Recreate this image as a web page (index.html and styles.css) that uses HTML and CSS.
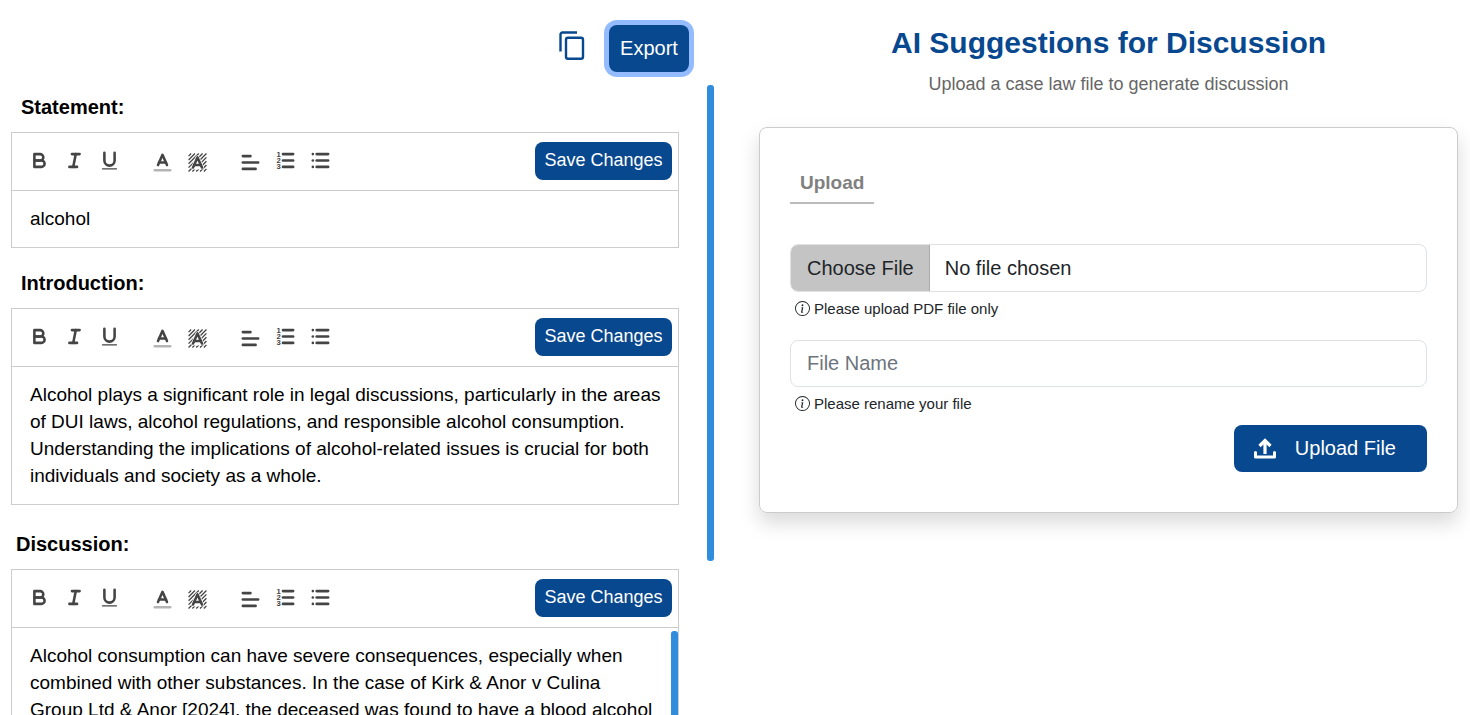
FILE: index.html
```html
<!DOCTYPE html>
<html lang="en">
<head>
    <meta charset="UTF-8">
    <meta name="viewport" content="width=device-width, initial-scale=1.0">
    <title>Case Discussion</title>
    <link rel="stylesheet" href="styles.css">
</head>
<body>
    <!-- toolbar icons -->
    <svg class="sprite" aria-hidden="true">
        <symbol id="i-bold" viewBox="0 0 18 18">
            <path class="st" d="M5,4H9.5A2.5,2.5,0,0,1,12,6.5v0A2.5,2.5,0,0,1,9.5,9H5A0,0,0,0,1,5,9V4A0,0,0,0,1,5,4Z"/>
            <path class="st" d="M5,9h5.5A2.5,2.5,0,0,1,13,11.5v0A2.5,2.5,0,0,1,10.5,14H5a0,0,0,0,1,0,0V9A0,0,0,0,1,5,9Z"/>
        </symbol>
        <symbol id="i-italic" viewBox="0 0 18 18">
            <line class="st" x1="7" x2="13" y1="4" y2="4"/>
            <line class="st" x1="5" x2="11" y1="14" y2="14"/>
            <line class="st" x1="8" x2="10" y1="14" y2="4"/>
        </symbol>
        <symbol id="i-underline" viewBox="0 0 18 18">
            <path class="st" d="M5,3V9a4.012,4.012,0,0,0,4,4H9a4.012,4.012,0,0,0,4-4V3"/>
            <rect class="fl" height="1" rx="0.5" ry="0.5" width="12" x="3" y="15"/>
        </symbol>
        <symbol id="i-color" viewBox="0 0 18 18">
            <line class="st faint" x1="3" x2="15" y1="15" y2="15"/>
            <polyline class="st" points="5.5 11 9 3 12.5 11"/>
            <line class="st" x1="11.63" x2="6.38" y1="9" y2="9"/>
        </symbol>
        <symbol id="i-background" viewBox="0 0 18 18">
            <path class="hatch" d="M2,4 4,2M2,7 7,2M2,10 10,2M2,13 13,2M2,16 16,2M5,16 16,5M8,16 16,8M11,16 16,11M14,16 16,14"/>
            <path class="halo" d="M5.500,13 9,5 12.500,13Z"/>
            <polyline class="st" points="5.5 13 9 5 12.5 13"/>
            <line class="st" x1="11.63" x2="6.38" y1="11" y2="11"/>
        </symbol>
        <symbol id="i-align" viewBox="0 0 18 18">
            <line class="st" x1="3" x2="15" y1="9" y2="9"/>
            <line class="st" x1="3" x2="13" y1="14" y2="14"/>
            <line class="st" x1="3" x2="9" y1="4" y2="4"/>
        </symbol>
        <symbol id="i-ordered" viewBox="0 0 18 18">
            <line class="st" x1="7" x2="15" y1="4" y2="4"/>
            <line class="st" x1="7" x2="15" y1="9" y2="9"/>
            <line class="st" x1="7" x2="15" y1="14" y2="14"/>
            <text class="num" x="2" y="6">1</text>
            <text class="num" x="2" y="11">2</text>
            <text class="num" x="2" y="16">3</text>
        </symbol>
        <symbol id="i-bullet" viewBox="0 0 18 18">
            <line class="st" x1="6" x2="15" y1="4" y2="4"/>
            <line class="st" x1="6" x2="15" y1="9" y2="9"/>
            <line class="st" x1="6" x2="15" y1="14" y2="14"/>
            <line class="st" x1="3" x2="3" y1="4" y2="4"/>
            <line class="st" x1="3" x2="3" y1="9" y2="9"/>
            <line class="st" x1="3" x2="3" y1="14" y2="14"/>
        </symbol>
        <symbol id="i-info" viewBox="0 0 16 16">
            <path d="M8 15A7 7 0 1 1 8 1a7 7 0 0 1 0 14m0 1A8 8 0 1 0 8 0a8 8 0 0 0 0 16"/>
            <path d="m8.930 6.588-2.290.287-.082.380.450.083c.294.070.352.176.288.469l-.738 3.468c-.194.897.105 1.319.808 1.319.545 0 1.178-.252 1.465-.598l.088-.416c-.200.176-.492.246-.686.246-.275 0-.375-.193-.304-.533zM9 4.500a1 1 0 1 1-2 0 1 1 0 0 1 2 0"/>
        </symbol>
    </svg>

    <div class="page">
        <section class="document">
            <div class="actions">
                <button type="button" class="copy-btn" aria-label="Copy">
                    <svg viewBox="0 0 26 30" fill="none" stroke="currentColor" stroke-width="2.400">
                        <path d="M1.500 20.500V3.500a2 2 0 0 1 2-2H18"/>
                        <rect x="7" y="6.800" width="17" height="21" rx="2"/>
                    </svg>
                </button>
                <button type="button" class="btn export-btn">Export</button>
            </div>

            <div class="scroll-area">
                <div class="sections">
                    <h2 class="label">Statement:</h2>
                    <div class="editor">
                        <div class="toolbar">
                            <div class="group">
                                <button type="button" aria-label="Bold"><svg><use href="#i-bold"/></svg></button>
                                <button type="button" aria-label="Italic"><svg><use href="#i-italic"/></svg></button>
                                <button type="button" aria-label="Underline"><svg><use href="#i-underline"/></svg></button>
                            </div>
                            <div class="group">
                                <button type="button" class="picker" aria-label="Text color"><svg><use href="#i-color"/></svg></button>
                                <button type="button" class="picker" aria-label="Highlight"><svg><use href="#i-background"/></svg></button>
                            </div>
                            <div class="group">
                                <button type="button" class="picker" aria-label="Align"><svg><use href="#i-align"/></svg></button>
                                <button type="button" aria-label="Numbered list"><svg><use href="#i-ordered"/></svg></button>
                                <button type="button" aria-label="Bullet list"><svg><use href="#i-bullet"/></svg></button>
                            </div>
                            <button type="button" class="btn save-btn">Save Changes</button>
                        </div>
                        <div class="content" contenteditable="true" spellcheck="false">alcohol</div>
                    </div>

                    <h2 class="label">Introduction:</h2>
                    <div class="editor">
                        <div class="toolbar">
                            <div class="group">
                                <button type="button" aria-label="Bold"><svg><use href="#i-bold"/></svg></button>
                                <button type="button" aria-label="Italic"><svg><use href="#i-italic"/></svg></button>
                                <button type="button" aria-label="Underline"><svg><use href="#i-underline"/></svg></button>
                            </div>
                            <div class="group">
                                <button type="button" class="picker" aria-label="Text color"><svg><use href="#i-color"/></svg></button>
                                <button type="button" class="picker" aria-label="Highlight"><svg><use href="#i-background"/></svg></button>
                            </div>
                            <div class="group">
                                <button type="button" class="picker" aria-label="Align"><svg><use href="#i-align"/></svg></button>
                                <button type="button" aria-label="Numbered list"><svg><use href="#i-ordered"/></svg></button>
                                <button type="button" aria-label="Bullet list"><svg><use href="#i-bullet"/></svg></button>
                            </div>
                            <button type="button" class="btn save-btn">Save Changes</button>
                        </div>
                        <div class="content" contenteditable="true" spellcheck="false">Alcohol plays a significant role in legal discussions, particularly in the areas of DUI laws, alcohol regulations, and responsible alcohol consumption. Understanding the implications of alcohol-related issues is crucial for both individuals and society as a whole.</div>
                    </div>

                    <h2 class="label label-discussion">Discussion:</h2>
                    <div class="editor">
                        <div class="toolbar">
                            <div class="group">
                                <button type="button" aria-label="Bold"><svg><use href="#i-bold"/></svg></button>
                                <button type="button" aria-label="Italic"><svg><use href="#i-italic"/></svg></button>
                                <button type="button" aria-label="Underline"><svg><use href="#i-underline"/></svg></button>
                            </div>
                            <div class="group">
                                <button type="button" class="picker" aria-label="Text color"><svg><use href="#i-color"/></svg></button>
                                <button type="button" class="picker" aria-label="Highlight"><svg><use href="#i-background"/></svg></button>
                            </div>
                            <div class="group">
                                <button type="button" class="picker" aria-label="Align"><svg><use href="#i-align"/></svg></button>
                                <button type="button" aria-label="Numbered list"><svg><use href="#i-ordered"/></svg></button>
                                <button type="button" aria-label="Bullet list"><svg><use href="#i-bullet"/></svg></button>
                            </div>
                            <button type="button" class="btn save-btn">Save Changes</button>
                        </div>
                        <div class="long">
                            <div class="content" contenteditable="true" spellcheck="false">Alcohol consumption can have severe consequences, especially when combined with other substances. In the case of Kirk &amp; Anor v Culina Group Ltd &amp; Anor [2024], the deceased was found to have a blood alcohol</div>
                            <div class="thumb"></div>
                        </div>
                    </div>
                </div>
                <div class="thumb thumb-page"></div>
            </div>
        </section>

        <section class="suggestions">
            <h1>AI Suggestions for Discussion</h1>
            <p class="subtitle">Upload a case law file to generate discussion</p>

            <form class="card">
                <a href="#" class="tab">Upload</a>

                <input type="file" id="case-file" class="field file-field" accept=".pdf">
                <label for="case-file" class="hint"><svg><use href="#i-info"/></svg>Please upload PDF file only</label>

                <input type="text" id="file-name" class="field name-field" placeholder="File Name">
                <label for="file-name" class="hint"><svg><use href="#i-info"/></svg>Please rename your file</label>

                <button type="button" class="btn upload-btn">
                    <svg viewBox="0 0 22 22" fill="none" stroke="currentColor" stroke-width="3.200">
                        <path d="M11 16V3M5.500 8 11 2.500l5.500 5.500"/>
                        <path d="M1.500 14.500v4.500h19v-4.500" stroke-linecap="round" stroke-linejoin="round" stroke-width="3"/>
                    </svg>
                    Upload File
                </button>
            </form>
        </section>
    </div>
</body>
</html>
```

FILE: styles.css
```css
* {
    box-sizing: border-box;
}
body {
    margin: 0;
    font-family: Arial, "Liberation Sans", sans-serif;
    background-color: white;
    color: #212529;
}
button, input {
    font-family: inherit;
}
.sprite {
    display: none;
}
.page {
    display: grid;
    grid-template-columns: 1fr 1fr;
    height: 100vh;
    overflow: hidden;
}
.btn {
    background-color: #07488f;
    color: white;
    border: none;
    border-radius: 8px;
    cursor: pointer;
}

/* left side */
.document {
    display: flex;
    flex-direction: column;
    min-height: 0;
    padding: 25px 21px 0 11px;
}
.actions {
    display: flex;
    justify-content: flex-end;
    gap: 24px;
    padding: 0 25px 13px 0;
}
.copy-btn {
    align-self: flex-start;
    margin-top: 6px;
    padding: 0;
    border: none;
    background: none;
    color: #07488f;
}
.copy-btn svg {
    display: block;
    width: 26px;
    height: 30px;
}
.export-btn {
    width: 80px;
    height: 47px;
    padding: 0;
    font-size: 20px;
    box-shadow: 0 0 0 5px #94bbfd;
}
.scroll-area {
    display: flex;
    flex: 1;
    gap: 28px;
    min-height: 0;
}
.sections {
    flex: 1;
    overflow-y: auto;
    padding: 7px 0 24px;
    scrollbar-width: none;
}
.thumb {
    flex: none;
    width: 7px;
    margin-top: 3px;
    background-color: #2f8ddc;
    border-radius: 3px;
}
.thumb-page {
    margin: 0 0 154px;
}
.label {
    margin: 0 0 10px;
    padding-left: 10px;
    font-size: 20px;
    line-height: 30px;
    color: black;
}
.label-discussion {
    padding-left: 5px;
}
.editor {
    margin-bottom: 20px;
    border: 1px solid #ccc;
}
.editor:has(+ .label-discussion) {
    margin-bottom: 24px;
}
.toolbar {
    display: flex;
    align-items: center;
    height: 58px;
    padding: 0 6px 2px 10px;
    border-bottom: 1px solid #ccc;
}
.group {
    display: flex;
    margin-right: 18px;
}
.group button {
    width: 35px;
    height: 30px;
    padding: 3px 6px;
    border: none;
    background: none;
}
.group .picker {
    padding: 5px 6px 1px;
}
.group svg {
    display: block;
    width: 23px;
    height: 23px;
}
.st {
    fill: none;
    stroke: #444;
    stroke-width: 2;
    stroke-linecap: round;
    stroke-linejoin: round;
}
.faint {
    opacity: 0.4;
}
.fl {
    fill: #444;
}
.hatch {
    fill: none;
    stroke: #444;
    stroke-width: 1;
}
.halo {
    fill: white;
    stroke: white;
    stroke-width: 3;
    stroke-linejoin: round;
}
.num {
    font-size: 6px;
    font-weight: bold;
    fill: #444;
}
.save-btn {
    height: 38px;
    margin-left: auto;
    padding: 0;
    width: 137px;
    font-size: 18px;
}
.content {
    padding: 14px 12px 15px 18px;
    font-size: 19px;
    line-height: 27px;
    color: black;
    outline: none;
}
.long {
    display: flex;
    height: 220px;
}
.long .content {
    flex: 1;
    padding-right: 18px;
    overflow-y: auto;
    scrollbar-width: none;
}

/* right side */
.suggestions {
    padding: 24px 12px 0 24px;
}
h1 {
    margin: 0;
    font-size: 30px;
    line-height: 38px;
    text-align: center;
    color: #07488f;
}
.subtitle {
    margin: 9px 0 30px;
    font-size: 18px;
    line-height: 26px;
    text-align: center;
    color: #666;
}
.card {
    display: flex;
    flex-direction: column;
    padding: 41px 30px 40px;
    border: 1px solid #ccc;
    border-radius: 8px;
    box-shadow: 0 10px 20px rgba(0, 0, 0, 0.15);
}
.tab {
    align-self: flex-start;
    padding: 0 10px 5px;
    margin-bottom: 40px;
    border-bottom: 2px solid #bbb;
    font-size: 19px;
    font-weight: bold;
    line-height: 28px;
    color: #808080;
    text-decoration: none;
}
.field {
    width: 100%;
    height: 48px;
    border: 1px solid #dee2e6;
    border-radius: 8px;
    font-size: 20px;
    color: #212529;
}
.name-field {
    height: 47px;
    margin-top: 15px;
    padding: 0 16px;
}
.field::placeholder {
    color: #6c757d;
}
.file-field {
    padding: 0;
    overflow: hidden;
    line-height: 46px;
}
.file-field::file-selector-button {
    height: 46px;
    margin: 0 15px 0 0;
    padding: 0 15px 0 16px;
    border: none;
    border-right: 1px solid #aaa;
    background-color: #c4c4c4;
    font: inherit;
    color: #212529;
}
.hint {
    display: flex;
    align-items: center;
    gap: 4px;
    height: 33px;
    padding-left: 5px;
    font-size: 15px;
}
.hint svg {
    width: 15px;
    height: 15px;
    fill: currentColor;
}
.upload-btn {
    display: flex;
    align-items: center;
    align-self: flex-end;
    gap: 19px;
    height: 47px;
    margin-top: 5px;
    padding: 0 31px 0 20px;
    font-size: 20px;
}
.upload-btn svg {
    width: 22px;
    height: 22px;
}
```
